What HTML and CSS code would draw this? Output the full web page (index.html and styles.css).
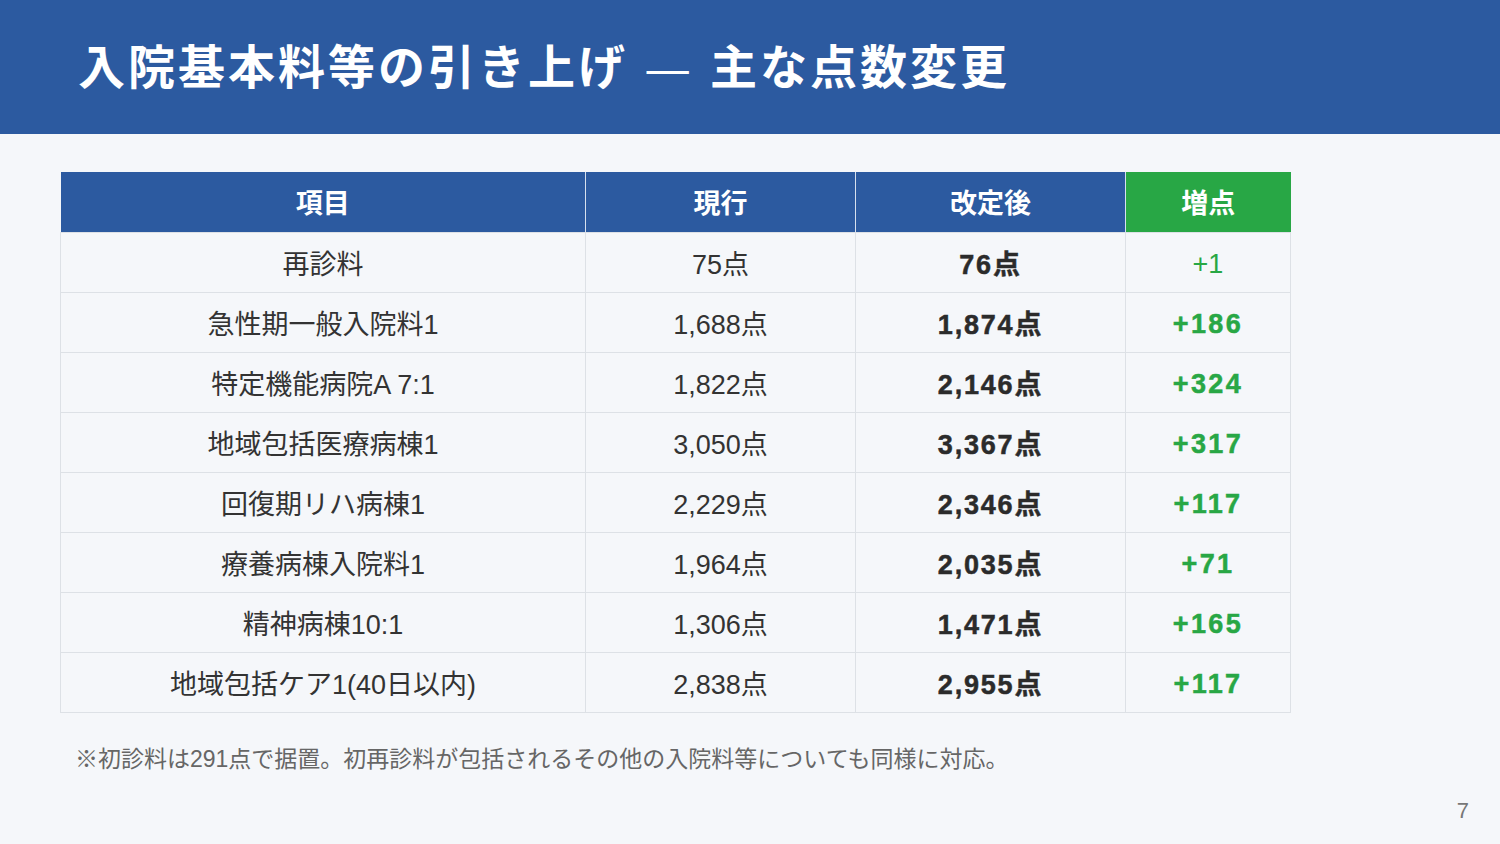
FILE: index.html
```html
<!DOCTYPE html>
<html lang="ja">
<head>
<meta charset="utf-8">
<link rel="stylesheet" href="styles.css">
</head>
<body>
<div class="slide">
  <header class="top">
    <h1 class="title">入院基本料等の引き上げ <span class="dash">—</span> 主な点数変更</h1>
  </header>
  <main class="content">
    <table class="points">
      <colgroup>
        <col class="c-item"><col class="c-cur"><col class="c-new"><col class="c-inc">
      </colgroup>
      <thead>
        <tr><th>項目</th><th>現行</th><th>改定後</th><th class="th-inc">増点</th></tr>
      </thead>
      <tbody>
        <tr><td>再診料</td><td>75点</td><td class="new">76点</td><td class="inc inc-light">+1</td></tr>
        <tr><td>急性期一般入院料1</td><td>1,688点</td><td class="new">1,874点</td><td class="inc">+186</td></tr>
        <tr><td>特定機能病院A 7:1</td><td>1,822点</td><td class="new">2,146点</td><td class="inc">+324</td></tr>
        <tr><td>地域包括医療病棟1</td><td>3,050点</td><td class="new">3,367点</td><td class="inc">+317</td></tr>
        <tr><td>回復期リハ病棟1</td><td>2,229点</td><td class="new">2,346点</td><td class="inc">+117</td></tr>
        <tr><td>療養病棟入院料1</td><td>1,964点</td><td class="new">2,035点</td><td class="inc">+71</td></tr>
        <tr><td>精神病棟10:1</td><td>1,306点</td><td class="new">1,471点</td><td class="inc">+165</td></tr>
        <tr><td>地域包括ケア1(40日以内)</td><td>2,838点</td><td class="new">2,955点</td><td class="inc">+117</td></tr>
      </tbody>
    </table>
    <p class="note">※初診料は291点で据置。初再診料が包括されるその他の入院料等についても同様に対応。</p>
  </main>
  <footer class="pager">7</footer>
</div>
</body>
</html>
```

FILE: styles.css
```css
* { box-sizing: border-box; }
html, body {
  margin: 0;
  padding: 0;
}
body {
  width: 1500px;
  height: 844px;
  background: #f5f7fa;
  font-family: "Liberation Sans", "Noto Sans CJK JP", sans-serif;
  color: #333;
  overflow: hidden;
}
.slide {
  position: relative;
  width: 1500px;
  height: 844px;
  display: flex;
  flex-direction: column;
}
.top {
  height: 134px;
  background: #2c5aa0;
  display: flex;
  align-items: center;
  padding-left: 78px;
}
.title {
  margin: 0;
  color: #fff;
  font-size: 47px;
  font-weight: 700;
  letter-spacing: 3px;
  line-height: 1;
}
.title .dash {
  display: inline-block;
  font-weight: 400;
  transform: scaleX(0.9);
}
.content {
  padding: 38px 0 0 60px;
}
.points {
  border-collapse: collapse;
  table-layout: fixed;
  width: 1230px;
  font-size: 27px;
}
.c-item { width: 525px; }
.c-cur { width: 270px; }
.c-new { width: 270px; }
.c-inc { width: 165px; }
.points th {
  height: 60px;
  padding: 0;
  background: #2c5aa0;
  color: #fff;
  font-weight: 700;
  font-size: 27px;
  text-align: center;
  border-left: 1px solid #d7e0ee;
}
.points th:first-child { border-left: none; }
.points th.th-inc { background: #28a745; }
.points td {
  height: 60px;
  padding: 0;
  text-align: center;
  border: 1px solid #dde1e6;
  color: #333;
}
.points td.new {
  font-weight: 700;
  color: #2b2b2b;
  letter-spacing: 1.8px;
  -webkit-text-stroke: 0.5px #2b2b2b;
}
.points td.inc {
  color: #28a745;
  font-weight: 700;
  letter-spacing: 2.4px;
  padding-top: 4px;
  -webkit-text-stroke: 0.5px #28a745;
}
.points td.inc-light {
  font-weight: 400;
  letter-spacing: 0;
  -webkit-text-stroke: 0;
}
.note {
  margin: 27px 0 0 15px;
  font-size: 23px;
  color: #666;
}
.pager {
  position: absolute;
  right: 31px;
  bottom: 20px;
  font-size: 22px;
  color: #777;
}
```
